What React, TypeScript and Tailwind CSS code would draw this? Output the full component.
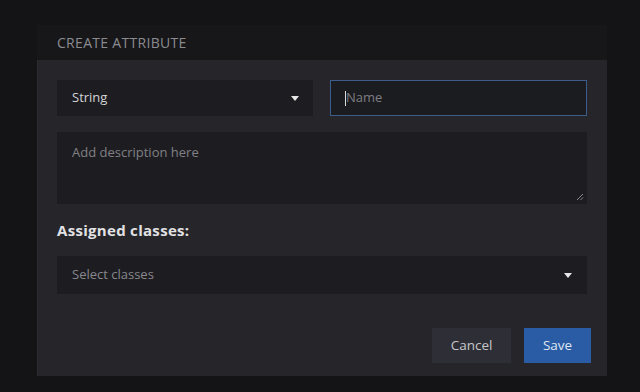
import React from 'react';

const font = { fontFamily: '"Open Sans", "Noto Sans", sans-serif' };

const Caret = () => (
  <svg width="8" height="5" viewBox="0 0 8 5" className="fill-[#e6e6e6]">
    <path d="M0 0h8L4 5z" />
  </svg>
);

export default function App() {
  return (
    <div className="w-[640px] h-[392px] bg-[#141416] overflow-hidden pt-[25px]" style={font}>
      <div className="ml-[37px] w-[570px] bg-[#17171a]">
        <div className="h-[35px] px-5 flex items-center">
          <h1 className="text-[14px] tracking-[0.3px] text-[#8b8b90] uppercase">Create Attribute</h1>
        </div>
        <div className="bg-[#25252a] border-l border-[#2c2c31] pl-[19px] pr-5 pt-5 pb-[13px]">
          <div className="grid grid-cols-[256px_1fr] gap-[17px]">
            <div className="h-9 bg-[#1d1d21] flex items-center justify-between pl-[15px] pr-[14px]">
              <span className="text-[13px] text-[#d4d4d6]">String</span>
              <Caret />
            </div>
            <div className="h-9 bg-[#1b1c20] border border-[#3c5d8c] flex items-center pl-[14px]">
              <span className="w-px h-[15px] bg-[#dcdcdc]" />
              <span className="text-[13px] text-[#7d7d82]">Name</span>
            </div>
          </div>
          <div className="relative mt-4 h-[72px] bg-[#1d1d21] px-[15px] pt-[7px]">
            <span className="text-[13px] text-[#808085]">Add description here</span>
            <svg width="8" height="8" viewBox="0 0 8 8" className="absolute right-[3px] bottom-[3px] stroke-[#8a8a8a]">
              <path d="M1 7L7 1M4.5 7L7 4.5" strokeWidth="1" />
            </svg>
          </div>
          <div className="mt-[15px] text-[15px] leading-[22px] font-bold text-[#e2e2e4] tracking-[0.3px]">Assigned classes:</div>
          <div className="mt-[15px] h-[38px] bg-[#1d1d21] flex items-center justify-between pl-[15px] pr-[15px]">
            <span className="text-[13px] text-[#88888d]">Select classes</span>
            <Caret />
          </div>
          <div className="mt-[34px] flex justify-end gap-[13px] mr-[-4px]">
            <button className="h-[35px] w-[79px] bg-[#2e2f36] text-[13.5px] text-[#c6c6ca]">Cancel</button>
            <button className="h-[35px] w-[67px] bg-[#2a5ca6] text-[13.5px] text-[#dfe6f2]">Save</button>
          </div>
        </div>
      </div>
    </div>
  );
}
